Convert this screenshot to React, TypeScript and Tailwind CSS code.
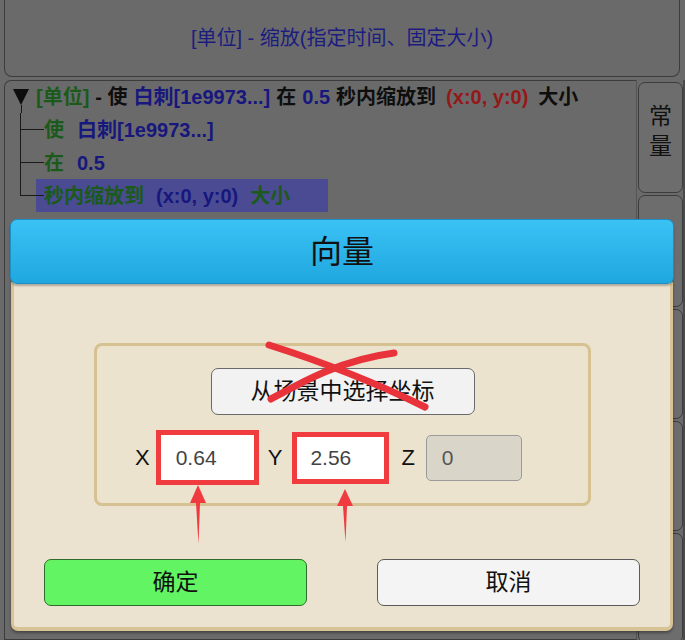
import React from 'react';

const font = "font-['Liberation_Sans','Noto_Sans_CJK_SC',sans-serif]";

type Part = { t: string; c: string };

const Line = ({ parts, gap }: { parts: Part[]; gap: string }) => (
  <div className={`flex items-center whitespace-nowrap ${gap}`}>
    {parts.map((p, i) => (
      <span key={i} className={p.c}>
        {p.t}
      </span>
    ))}
  </div>
);

const green = 'text-[#1a5a1a]';
const blue = 'text-[#17177e]';
const red = 'text-[#951818]';
const black = 'text-[#0e0e0e]';

const Branch = ({ children }: { children: React.ReactNode }) => (
  <div className="flex h-[33px]">
    <div className="w-[15px] shrink-0" />
    <div className="w-[24px] shrink-0 flex flex-col">
      <div className="h-1/2 border-l border-b border-[#1a1a1a]" />
      <div className="flex-1 border-l border-[#1a1a1a]" />
    </div>
    {children}
  </div>
);

const Tab = ({ h, label }: { h: string; label?: string }) => (
  <div
    className={`${h} w-[45px] shrink-0 rounded-[7px] border border-[#3c3c3c] bg-[#6d6d6d] flex flex-col items-center pt-[18px] text-[23px] leading-[30px] text-[#111]`}
  >
    {label?.split('').map((ch, i) => (
      <span key={i}>{ch}</span>
    ))}
  </div>
);

const Annotations = () => (
  <svg className="absolute left-0 top-0 pointer-events-none" width="685" height="640">
    <g stroke="#e8333b" strokeWidth="7" strokeLinecap="round" fill="none">
      <path d="M269 345 C 310 358, 370 380, 425 407" />
      <path d="M271 399 C 300 383, 340 360, 394 353" />
    </g>
    <g fill="#ef3a3f">
      <polygon points="198,485 190,503 206,503" />
      <polygon points="196,503 200,503 198.5,544" />
      <polygon points="345,489 337,506 353,506" />
      <polygon points="343,506 347,506 345.5,542" />
    </g>
  </svg>
);

const App = () => {
  return (
    <div className={`relative w-[685px] h-[640px] overflow-hidden bg-[#6a6a6a] ${font}`}>
      {/* top title bar */}
      <div className="mx-[4px] mr-[5px] h-[77px] rounded-b-[8px] border border-t-0 border-[#3c3c3c] flex items-center justify-center text-[20px] text-[#1c1c80]">
        [单位] - 缩放(指定时间、固定大小)
      </div>

      <div className="flex mt-[3px] ml-[4px] gap-[1px]">
        {/* tree panel */}
        <div className="flex-1 h-[560px] rounded-tl-[7px] border border-[#3c3c3c] border-r-[#555] text-[20px] font-bold">
          <div className="flex h-[32px] items-center">
            <div className="w-[31px] shrink-0 flex flex-col items-center self-stretch pl-[1px]">
              <div className="mt-[8px] w-0 h-0 border-l-[8px] border-r-[8px] border-t-[16px] border-l-transparent border-r-transparent border-t-[#0d0d0d]" />
              <div className="flex-1 w-0 border-l border-[#1a1a1a]" />
            </div>
            <Line
              gap="gap-[6px]"
              parts={[
                { t: '[单位]', c: green },
                { t: '- 使', c: black },
                { t: '白刺[1e9973...]', c: blue },
                { t: '在', c: black },
                { t: '0.5', c: blue },
                { t: '秒内缩放到', c: `${black} mr-[4px]` },
                { t: '(x:0, y:0)', c: `${red} mr-[4px]` },
                { t: '大小', c: black },
              ]}
            />
          </div>
          <Branch>
            <Line gap="gap-[13px]" parts={[{ t: '使', c: green }, { t: '白刺[1e9973...]', c: blue }]} />
          </Branch>
          <Branch>
            <Line gap="gap-[13px]" parts={[{ t: '在', c: green }, { t: '0.5', c: blue }]} />
          </Branch>
          <div className="flex h-[33px]">
            <div className="w-[15px] shrink-0" />
            <div className="w-[16px] shrink-0 flex flex-col">
              <div className="h-1/2 border-l border-b border-[#1a1a1a]" />
            </div>
            <div className="w-[292px] bg-[#4b4b93] flex">
              <div className="w-[8px] shrink-0 flex flex-col">
                <div className="h-1/2 border-b border-[#1a1a1a]" />
              </div>
              <div className="flex items-center">
                <Line
                  gap="gap-[12px]"
                  parts={[
                    { t: '秒内缩放到', c: green },
                    { t: '(x:0, y:0)', c: blue },
                    { t: '大小', c: green },
                  ]}
                />
              </div>
            </div>
          </div>
        </div>

        {/* right tabs */}
        <div className="w-[47px] flex flex-col gap-[2px] pt-[2px] border-r-[2px] border-[#4a4a4a]">
          <Tab h="h-[111px]" label="常量" />
          <Tab h="h-[112px]" />
          <Tab h="h-[110px]" />
          <Tab h="h-[110px]" />
          <Tab h="h-[110px]" />
        </div>
      </div>

      {/* dialog */}
      <div className="absolute left-[10px] top-[219px] w-[664px] flex flex-col">
        <div className="relative z-10 h-[65px] rounded-[7px] border border-[#1c8fc4] bg-gradient-to-b from-[#3ac2f5] to-[#1ea7df] shadow-[0_2px_2px_rgba(0,0,0,0.25)] flex items-center justify-center text-[32px] text-[#111]">
          向量
        </div>
        <div className="-mt-[2px] h-[349px] mx-[1px] rounded-b-[7px] border-x-[3px] border-b-[4px] border-[#d7c396] bg-[#ebe2cf] shadow-[0_2px_3px_rgba(0,0,0,0.35)] flex flex-col">
          <div className="ml-[80px] mt-[61px] w-[497px] h-[163px] rounded-[8px] border-[3px] border-[#d6c191] bg-[#ece3ce] flex flex-col items-center">
            <div className="mt-[22px] w-[264px] h-[47px] rounded-[7px] border border-[#6a6a6a] bg-[#f2f2f2] flex items-center justify-center text-[23px] text-[#111]">
              从场景中选择坐标
            </div>
            <div className="self-start ml-[38px] mt-[15px] flex items-center text-[22px] text-[#111]">
              <span>X</span>
              <div className="ml-[6px] w-[103px] h-[55px] border-[5px] border-[#f03c3e] bg-white flex items-center pl-[15px] text-[21px] text-[#444]">
                0.64
              </div>
              <span className="ml-[9px]">Y</span>
              <div className="ml-[10px] w-[97px] h-[52px] border-[5px] border-[#f03c3e] bg-white flex items-center pl-[13px] text-[21px] text-[#444]">
                2.56
              </div>
              <span className="ml-[12px]">Z</span>
              <div className="ml-[11px] w-[96px] h-[46px] rounded-[5px] border border-[#9a9a9a] bg-[#d9d5c9] flex items-center pl-[15px] text-[21px] text-[#555]">
                0
              </div>
            </div>
          </div>
          <div className="mt-[53px] flex justify-between px-[30px]">
            <div className="w-[263px] h-[47px] rounded-[7px] border border-[#2f6b2f] bg-[#62f462] flex items-center justify-center text-[23px] text-[#111]">
              确定
            </div>
            <div className="w-[263px] h-[47px] rounded-[7px] border border-[#5a5a5a] bg-[#f4f4f4] flex items-center justify-center text-[23px] text-[#111]">
              取消
            </div>
          </div>
        </div>
      </div>

      <Annotations />
    </div>
  );
};

export default App;
